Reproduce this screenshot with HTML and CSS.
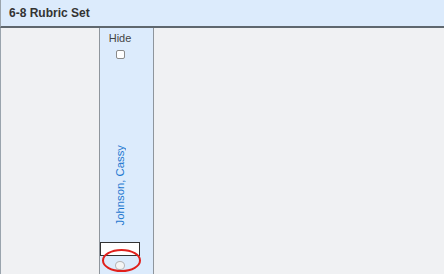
FILE: index.html
```html
<!DOCTYPE html>
<html>
<head>
<title>Rubric Set</title>
<link rel="stylesheet" href="styles.css">
</head>
<body>
<div class="set-header">6-8 Rubric Set</div>
<div class="grid">
  <div class="grid-spacer"></div>
  <div class="student-col">
    <div class="student-cell">
      <div class="hide-label">Hide</div>
      <input class="hide-box" type="checkbox">
      <div class="name-wrap">
        <span class="student-name">Johnson, Cassy</span>
      </div>
      <input class="score-input" type="text">
      <span class="score-dot"></span>
    </div>
    <span class="marker"></span>
  </div>
</div>
</body>
</html>
```
FILE: styles.css
```css
html, body {
  margin: 0;
  padding: 0;
  height: 100%;
  overflow: hidden;
}
body {
  background: #f0f1f3;
  font-family: "Liberation Sans", Arial, Helvetica, sans-serif;
  display: flex;
  flex-direction: column;
}
.set-header {
  height: 26px;
  line-height: 26px;
  padding-left: 8px;
  background: #dcebfc;
  border-left: 1px solid #9aa4ad;
  border-bottom: 2px solid #5f676e;
  color: #333;
  font-size: 12px;
  font-weight: bold;
  flex: none;
}
.grid {
  flex: 1;
  display: flex;
  border-left: 1px solid #9aa4ad;
}
.grid-spacer {
  width: 98px;
}
.student-col {
  position: relative;
  width: 53px;
  background: #dcebfc;
  border-left: 1px solid #8e959c;
  border-right: 1px solid #8e959c;
}
.student-cell {
  width: 40px;
  height: 100%;
  display: flex;
  flex-direction: column;
  align-items: center;
}
.hide-label {
  margin-top: 3px;
  line-height: 14px;
  font-size: 11px;
  color: #444;
}
.hide-box {
  -webkit-appearance: none;
  appearance: none;
  margin: 5px 0 0 0;
  width: 9px;
  height: 9px;
  border: 1px solid #8a8a8a;
  border-radius: 2px;
  background: #fff;
}
.name-wrap {
  flex: 1;
  display: flex;
  align-items: flex-end;
  padding-bottom: 17px;
}
.student-name {
  writing-mode: vertical-rl;
  transform: rotate(180deg);
  font-size: 11.3px;
  color: #1f78d0;
  white-space: nowrap;
}
.score-input {
  box-sizing: border-box;
  width: 40px;
  height: 14px;
  margin: 0;
  padding: 0;
  border: 1px solid #333;
  background: #fff;
}
.score-dot {
  margin-top: 5px;
  margin-bottom: 4px;
  width: 8px;
  height: 7px;
  border: 1px solid #b5b5b5;
  border-radius: 50%;
  background: #f4f4f4;
  flex: none;
}
.marker {
  position: absolute;
  left: 2px;
  top: 221px;
  width: 35px;
  height: 19px;
  border: 2px solid #e0201c;
  border-radius: 50%;
}
```
